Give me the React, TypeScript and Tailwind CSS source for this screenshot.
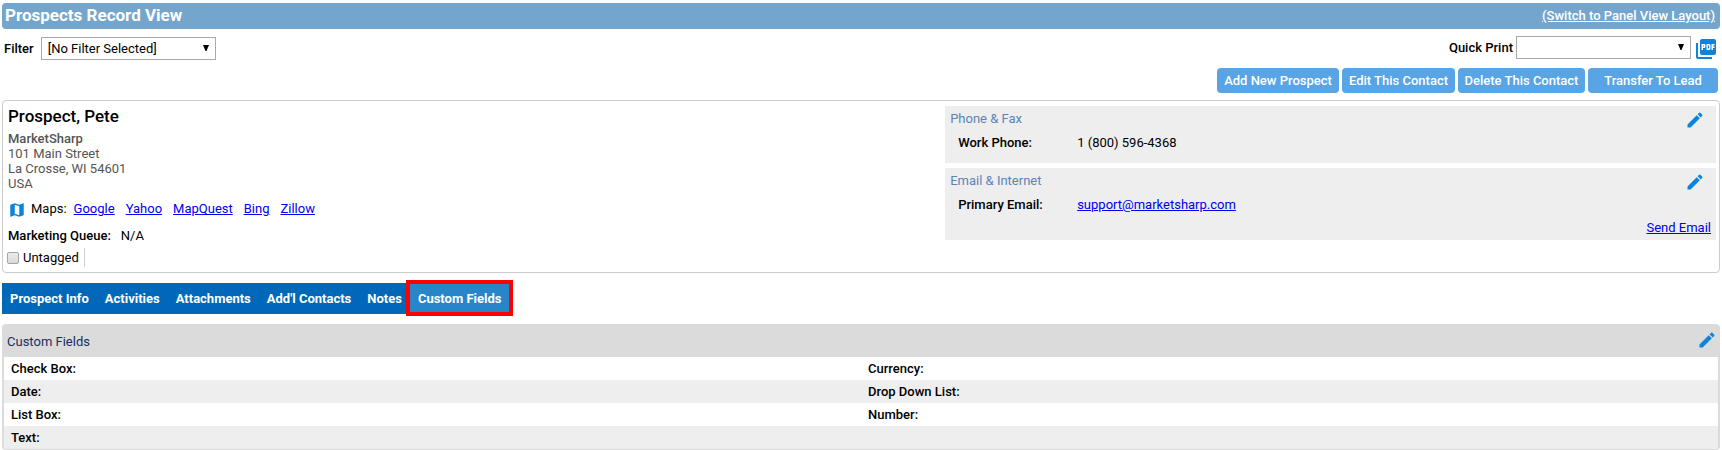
import { useState } from "react";
import type { ReactNode } from "react";
import { MdEdit, MdMap, MdPictureAsPdf } from "react-icons/md";

const ACTIONS = [
  { label: "Add New Prospect", width: "w-[122px]" },
  { label: "Edit This Contact", width: "w-[113px]" },
  { label: "Delete This Contact", width: "w-[127px]" },
  { label: "Transfer To Lead", width: "w-[130px]" },
];

const MAPS = ["Google", "Yahoo", "MapQuest", "Bing", "Zillow"];

const TABS = ["Prospect Info", "Activities", "Attachments", "Add'l Contacts", "Notes", "Custom Fields"];

const FIELDS = [
  ["Check Box:", "Currency:"],
  ["Date:", "Drop Down List:"],
  ["List Box:", "Number:"],
  ["Text:", ""],
];

function SelectBox({ id, options }: { id: string; options: string[] }) {
  return (
    <div className="relative">
      <select
        id={id}
        className="block h-[23px] w-[175px] appearance-none border border-[#a9a9a9] bg-white pl-1.5 pr-5 text-[13px] leading-[21px] text-black"
      >
        {options.map((o) => (
          <option key={o}>{o}</option>
        ))}
      </select>
      <svg
        viewBox="0 0 6 6"
        className="pointer-events-none absolute right-[7px] top-2 h-[6px] w-[6px]"
        aria-hidden="true"
      >
        <path d="M0 0h6L3.5 6h-1z" fill="#000" />
      </svg>
    </div>
  );
}

function EditButton({ label }: { label: string }) {
  return (
    <button type="button" aria-label={label} className="shrink-0 cursor-pointer text-[#0a84dc]">
      <MdEdit className="h-5 w-5" />
    </button>
  );
}

function InfoPanel({
  title,
  label,
  children,
  footer,
}: {
  title: string;
  label: string;
  children: ReactNode;
  footer?: ReactNode;
}) {
  return (
    <section className="bg-[#eee] px-[5px] py-1">
      <div className="flex justify-between pr-1.5">
        <h2 className="pt-px leading-4 text-[#5b84b8]">{title}</h2>
        <EditButton label={`Edit ${title}`} />
      </div>
      <dl className="flex h-[29px] pl-2 pt-[3px] leading-5">
        <dt className="w-[119px] font-medium">{label}</dt>
        <dd>{children}</dd>
      </dl>
      {footer && <div className="-mt-px flex justify-end leading-4">{footer}</div>}
    </section>
  );
}

export default function App() {
  const [tagged, setTagged] = useState(false);
  const [activeTab, setActiveTab] = useState("Custom Fields");

  return (
    <main className="bg-white px-0.5 pt-[3px] font-[Roboto,sans-serif] text-[13px] text-black">
      {/* Title bar */}
      <header className="flex h-[26px] items-center justify-between rounded bg-[#74a6cd] pl-[3px] pr-[5px] text-white">
        <h1 className="text-[17px] font-bold">Prospects Record View</h1>
        <a href="#panel" className="font-medium underline">
          (Switch to Panel View Layout)
        </a>
      </header>

      {/* Filter and print */}
      <div className="mt-[7px] flex items-start justify-between">
        <div className="flex items-center gap-[7px] pl-0.5 pt-px">
          <label htmlFor="filter" className="font-medium">
            Filter
          </label>
          <SelectBox id="filter" options={["[No Filter Selected]"]} />
        </div>
        <div className="flex items-start pr-0.5">
          <label htmlFor="print" className="pr-[3px] font-medium leading-[23px]">
            Quick Print
          </label>
          <SelectBox id="print" options={[""]} />
          <button type="button" aria-label="Export PDF" className="cursor-pointer pl-[3px] pt-px text-[#0a84dc]">
            <MdPictureAsPdf className="h-6 w-6" />
          </button>
        </div>
      </div>

      {/* Record actions */}
      <div className="mt-[7px] flex justify-end gap-[3px] pr-0.5">
        {ACTIONS.map((a) => (
          <button
            key={a.label}
            type="button"
            className={`${a.width} h-[25px] cursor-pointer whitespace-nowrap rounded bg-[#58a4e5] font-medium text-white`}
          >
            {a.label}
          </button>
        ))}
      </div>

      {/* Contact card */}
      <div className="mt-[7px] flex rounded border border-[#ccc] pb-[5px] pr-[3px] pt-[5px]">
        <div className="w-[55%] grow pl-[5px]">
          <h2 className="text-[17px] font-medium leading-5">Prospect, Pete</h2>
          <address className="mt-[5px] not-italic leading-[15px] text-[#555]">
            <div className="font-medium">MarketSharp</div>
            <div>101 Main Street</div>
            <div>La Crosse, WI 54601</div>
            <div>USA</div>
          </address>
          <div className="mt-2 flex h-5 items-center">
            <MdMap className="mt-0.5 h-[18px] w-[18px] text-[#0a84dc]" />
            <span className="pl-[5px] pr-[7px]">Maps:</span>
            <div className="flex gap-[11px]">
              {MAPS.map((m) => (
                <a key={m} href={`#${m}`} className="text-[#0000ee] underline">
                  {m}
                </a>
              ))}
            </div>
          </div>
          <div className="mt-[7px] flex h-5 items-center gap-2.5">
            <span className="font-medium">Marketing Queue:</span>
            <span>N/A</span>
          </div>
          <div className="mt-0.5 flex">
            <label className="-ml-px flex h-[19px] items-center gap-1 border-r border-[#ccc] pr-[5px]">
              <input
                type="checkbox"
                checked={tagged}
                onChange={(e) => setTagged(e.target.checked)}
                className="h-3 w-3 appearance-none rounded-xs border border-[#a5a5a5] bg-linear-to-b from-[#ececec] to-[#d9d9d9] checked:bg-[#0a84dc]"
              />
              Untagged
            </label>
          </div>
        </div>

        <div className="flex w-[45%] flex-col gap-[5px]">
          <InfoPanel title="Phone & Fax" label="Work Phone:">
            1 (800) 596-4368
          </InfoPanel>
          <InfoPanel
            title="Email & Internet"
            label="Primary Email:"
            footer={
              <a href="#send" className="text-[#0000ee] underline">
                Send Email
              </a>
            }
          >
            <a href="mailto:support@marketsharp.com" className="text-[#0000ee] underline">
              support@marketsharp.com
            </a>
          </InfoPanel>
        </div>
      </div>

      {/* Tabs */}
      <nav className="mt-2.5 flex">
        {TABS.map((t) => (
          <a
            key={t}
            href="#tab"
            onClick={() => setActiveTab(t)}
            className={`relative h-[31px] whitespace-nowrap px-2 font-bold leading-[31px] text-white ${
              t === activeTab ? "bg-[#2785c9]" : "bg-[#0068b9]"
            }`}
          >
            {t}
            {t === activeTab && (
              <span className="absolute -bottom-[2px] -left-1 -right-1 -top-[3px] border-4 border-[#fe0000]" />
            )}
          </a>
        ))}
      </nav>

      {/* Custom fields */}
      <section className="mt-2.5 rounded border-x-2 border-b border-[#dbdbdb] bg-[#dbdbdb]">
        <div className="flex h-[33px] items-start justify-between pl-[3px] pr-px pt-1.5">
          <h2 className="pt-0.5 leading-5 text-[#16305e]">Custom Fields</h2>
          <EditButton label="Edit Custom Fields" />
        </div>
        <table className="w-full table-fixed border-collapse">
          <tbody>
            {FIELDS.map(([left, right]) => (
              <tr key={left} className="h-[23px] bg-white even:bg-[#eee]">
                <th className="pl-[7px] text-left font-medium">{left}</th>
                <th className="pl-[7px] text-left font-medium">{right}</th>
              </tr>
            ))}
          </tbody>
        </table>
      </section>
    </main>
  );
}
